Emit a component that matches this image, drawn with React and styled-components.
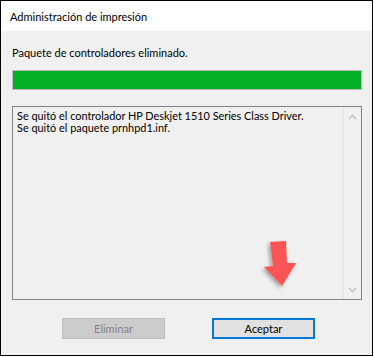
import React from "react";
import styled, { createGlobalStyle } from "styled-components";

const Global = createGlobalStyle`
  html, body {
    margin: 0;
    padding: 0;
    background: #ffffff;
  }
  body {
    font-family: Lato, "Liberation Sans", Arial, sans-serif;
    font-size: 12px;
    color: #000;
  }
`;

const Window = styled.div`
  box-sizing: border-box;
  width: 373px;
  height: 356px;
  border: 1px solid #000;
  background: #f0f0f0;
  display: flex;
  flex-direction: column;
`;

const TitleBar = styled.div`
  height: 30px;
  background: #fff;
  display: flex;
  align-items: center;
  padding-left: 9px;
  font-size: 11px;
  color: #000;
`;

const Body = styled.div`
  flex: 1;
  display: flex;
  flex-direction: column;
  padding: 14px 10px 0 11px;
`;

const Label = styled.div`
  font-size: 11px;
  line-height: 15px;
  color: #000;
  margin-bottom: 10px;
`;

const Progress = styled.div`
  box-sizing: border-box;
  height: 20px;
  border: 1px solid #bcbcbc;
  background: #e6e6e6;
`;

const Fill = styled.div`
  height: 100%;
  background: #06b025;
`;

const LogBox = styled.div`
  box-sizing: border-box;
  margin-top: 16px;
  height: 194px;
  border: 1px solid #828282;
  display: flex;
  position: relative;
`;

const LogText = styled.div`
  flex: 1;
  padding: 3px 0 0 4px;
  font-size: 10.9px;
  line-height: 12px;
  white-space: pre;
`;

const ScrollBar = styled.div`
  width: 17px;
  border-left: 1px solid #e3e3e3;
  display: flex;
  flex-direction: column;
  justify-content: space-between;
  align-items: center;
  padding: 7px 0 6px;
`;

const Chevron = ({ up }) => (
  <svg width="9" height="6" viewBox="0 0 9 6">
    <path
      d={up ? "M1 5 L4.5 1.5 L8 5" : "M1 1 L4.5 4.5 L8 1"}
      fill="none"
      stroke="#c4c4c4"
      strokeWidth="1.6"
    />
  </svg>
);

const Arrow = styled.svg`
  position: absolute;
  left: 248px;
  top: 130px;
  overflow: visible;
`;

const Buttons = styled.div`
  display: flex;
  gap: 47px;
  margin-top: 18px;
  padding-left: 50px;
`;

const Button = styled.div`
  box-sizing: border-box;
  width: 103px;
  height: 21px;
  display: flex;
  align-items: center;
  justify-content: center;
  border: ${(p) => (p.primary ? "2px solid #0078d7" : "1px solid #bfbfbf")};
  background: ${(p) => (p.disabled ? "#cccccc" : "#e1e1e1")};
  color: ${(p) => (p.disabled ? "#838383" : "#000")};
  font-size: 11px;
`;

export default function App() {
  return (
    <>
      <Global />
      <Window>
        <TitleBar>Administración de impresión</TitleBar>
        <Body>
          <Label>Paquete de controladores eliminado.</Label>
          <Progress>
            <Fill style={{ width: "100%" }} />
          </Progress>
          <LogBox>
            <LogText>
              {"Se quitó el controlador HP Deskjet 1510 Series Class Driver.\nSe quitó el paquete prnhpd1.inf."}
            </LogText>
            <ScrollBar>
              <Chevron up />
              <Chevron />
            </ScrollBar>
            <Arrow width="40" height="50" viewBox="0 0 40 50">
              <defs>
                <filter id="sh" x="-50%" y="-50%" width="200%" height="200%">
                  <feGaussianBlur in="SourceAlpha" stdDeviation="2" />
                  <feOffset dx="-2" dy="2" result="b" />
                  <feComponentTransfer>
                    <feFuncA type="linear" slope="0.35" />
                  </feComponentTransfer>
                  <feMerge>
                    <feMergeNode />
                    <feMergeNode in="SourceGraphic" />
                  </feMerge>
                </filter>
              </defs>
              <polygon
                points="9,5 25,4 26,26 35,26 21,49 3,30 12,29"
                fill="#fd5555"
                filter="url(#sh)"
              />
            </Arrow>
          </LogBox>
          <Buttons>
            <Button disabled>Eliminar</Button>
            <Button primary>Aceptar</Button>
          </Buttons>
        </Body>
      </Window>
    </>
  );
}
